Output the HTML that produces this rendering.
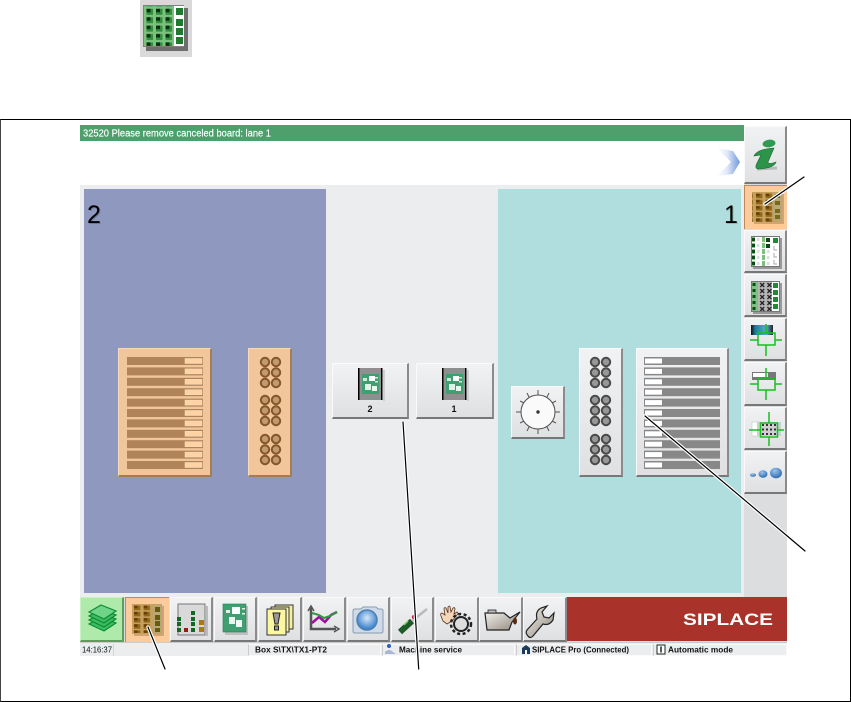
<!DOCTYPE html>
<html><head><meta charset="utf-8"><style>
html,body{margin:0;padding:0;background:#fff}
body{width:851px;height:702px;position:relative;overflow:hidden;font-family:"Liberation Sans",sans-serif}
.a{position:absolute;box-sizing:border-box}
.b{position:absolute;box-sizing:border-box;background:linear-gradient(#f1f2f4,#dfe0e2);border-top:1px solid #fafafa;border-left:1px solid #fafafa;border-right:2px solid #8b8b8b;border-bottom:2px solid #777}
.o{background:#fccb9b;border:0;border-left:1px solid #c08a58;border-top:1px solid #c08a58}
</style></head><body>
<div class="a" style="left:140px;top:0;width:52px;height:57px;background:#d9d9d9"></div>
<div class="a" style="left:0;top:119px;width:851px;height:583px;border:1px solid #000;border-left-color:#444"></div>
<div class="a" style="left:80px;top:125px;width:664px;height:16px;background:#4e9f6b"></div>
<div class="a" style="left:80px;top:185px;width:664px;height:412px;background:#ecedef"></div>
<div class="a" style="left:84px;top:189px;width:242px;height:404px;background:#8f99bf"></div>
<div class="a" style="left:498px;top:189px;width:243px;height:404px;background:#b0dddd"></div>
<div class="a" style="left:744px;top:126px;width:43px;height:471px;background:#dcdddf"></div>
<div class="b" style="left:744px;top:126px;width:43px;height:58px"></div>
<div class="b o" style="left:744px;top:185px;width:43px;height:44px"></div>
<div class="b" style="left:744px;top:230px;width:43px;height:43px"></div>
<div class="b" style="left:744px;top:274px;width:43px;height:43px"></div>
<div class="b" style="left:744px;top:318px;width:43px;height:43px"></div>
<div class="b" style="left:744px;top:362px;width:43px;height:44px"></div>
<div class="b" style="left:744px;top:407px;width:43px;height:43px"></div>
<div class="b" style="left:744px;top:451px;width:43px;height:43px"></div>
<div class="a" style="left:118px;top:348px;width:94px;height:129px;background:#f2c69b;border:1px solid #f7d9bc;border-right:2px solid #a67c52;border-bottom:2px solid #a67c52"></div>
<div class="a" style="left:248px;top:348px;width:44px;height:129px;background:#f2c69b;border:1px solid #f7d9bc;border-right:2px solid #a67c52;border-bottom:2px solid #a67c52"></div>
<div class="b" style="left:579px;top:348px;width:44px;height:129px"></div>
<div class="b" style="left:636px;top:348px;width:93px;height:129px"></div>
<div class="b" style="left:511px;top:386px;width:54px;height:53px"></div>
<div class="b" style="left:332px;top:363px;width:77px;height:56px"></div>
<div class="b" style="left:416px;top:363px;width:78px;height:56px"></div>
<div class="a" style="left:80px;top:597px;width:707px;height:45px;background:#dcdddf"></div>
<div class="b" style="left:80px;top:597px;width:44px;height:45px;background:#aeeaaa;border-color:#c8f2c4 #5f9c5f #5f9c5f #c8f2c4"></div>
<div class="b o" style="left:125px;top:597px;width:44px;height:45px"></div>
<div class="b" style="left:170px;top:597px;width:43px;height:45px"></div>
<div class="b" style="left:214px;top:597px;width:43px;height:45px"></div>
<div class="b" style="left:258px;top:597px;width:44px;height:45px"></div>
<div class="b" style="left:303px;top:597px;width:43px;height:45px"></div>
<div class="b" style="left:347px;top:597px;width:43px;height:45px"></div>
<div class="b" style="left:391px;top:597px;width:43px;height:45px"></div>
<div class="b" style="left:435px;top:597px;width:44px;height:45px"></div>
<div class="b" style="left:479px;top:597px;width:44px;height:45px"></div>
<div class="b" style="left:523px;top:597px;width:44px;height:45px"></div>
<div class="a" style="left:567px;top:597px;width:220px;height:44px;background:#a9322a"></div>
<div class="a" style="left:80px;top:642px;width:707px;height:14px;background:#ecedef;border-top:1px solid #ccc"></div>
<div class="a" style="left:113px;top:644px;width:1px;height:12px;background:#d5d5d5"></div>
<div class="a" style="left:248px;top:644px;width:133px;height:12px;border:1px solid #fafafa;border-left-color:#ccc"></div>
<div class="a" style="left:382px;top:644px;width:133px;height:12px;border:1px solid #fafafa;border-left-color:#ccc"></div>
<div class="a" style="left:516px;top:644px;width:136px;height:12px;border:1px solid #fafafa;border-left-color:#ccc"></div>
<div class="a" style="left:653px;top:644px;width:134px;height:12px;border:1px solid #fafafa;border-left-color:#ccc"></div>

<svg class="a" style="left:0;top:0" width="851" height="702" viewBox="0 0 851 702">
<defs>
<linearGradient id="chev" x1="0" x2="1" y1="0" y2="0"><stop offset="0" stop-color="#fff"/><stop offset=".45" stop-color="#dfe8f8"/><stop offset="1" stop-color="#6f97dc"/></linearGradient>
<linearGradient id="teal" x1="0" x2="1" y1="0" y2="0"><stop offset="0" stop-color="#111"/><stop offset=".2" stop-color="#1a7f9a"/><stop offset=".7" stop-color="#55b0c8"/><stop offset="1" stop-color="#222"/></linearGradient>
<radialGradient id="drop" cx=".4" cy=".3" r=".8"><stop offset="0" stop-color="#9cc4ee"/><stop offset="1" stop-color="#1f5fa8"/></radialGradient>
<radialGradient id="lens" cx=".5" cy=".4" r=".6"><stop offset="0" stop-color="#d6e8fa"/><stop offset="1" stop-color="#2f78c8"/></radialGradient>
<linearGradient id="can" x1="0" x2="1" y1="0" y2="1"><stop offset="0" stop-color="#f5f3ee"/><stop offset="1" stop-color="#8d857a"/></linearGradient>
<pattern id="pg" width="9.500" height="8.400" patternUnits="userSpaceOnUse" x="146" y="8"><rect width="9.500" height="8.400" fill="#7fc080"/><rect x=".5" y=".8" width="6.500" height="6" fill="#2f8f3c"/><rect x=".5" y=".8" width="4" height="3.500" fill="#07300e"/></pattern>
<pattern id="po" width="9.600" height="6.200" patternUnits="userSpaceOnUse" x="755" y="193"><rect width="9.600" height="6.200" fill="#c7a060"/><rect x="1" y=".6" width="6.400" height="4.600" fill="#8e6a16"/><rect x="1" y=".6" width="3.600" height="2.600" fill="#6a3d08"/></pattern>
<pattern id="po2" width="9.600" height="6.200" patternUnits="userSpaceOnUse" x="133" y="605"><rect width="9.600" height="6.200" fill="#c7a060"/><rect x="1" y=".6" width="6.400" height="4.600" fill="#8e6a16"/><rect x="1" y=".6" width="3.600" height="2.600" fill="#6a3d08"/></pattern>
<pattern id="pl" width="10" height="6" patternUnits="userSpaceOnUse" x="752" y="237"><rect width="10" height="6" fill="#fff"/><rect width="3" height="5" fill="#7fc080"/><path d="M5 1h2.500v3H5z" fill="#ddd"/></pattern>
<pattern id="px" width="7.200" height="6" patternUnits="userSpaceOnUse" x="752" y="282"><rect width="7.200" height="6" fill="#b5b5b5"/><path d="M1 1l4 4M5 1l-4 4" stroke="#222" stroke-width="1.300"/></pattern>
<g id="cc"><circle cx="0" cy="0" r="4.200"/><circle cx="11" cy="0" r="4.200"/><circle cx="0" cy="10.500" r="4.200"/><circle cx="11" cy="10.500" r="4.200"/><circle cx="0" cy="21" r="4.200"/><circle cx="11" cy="21" r="4.200"/><circle cx="0" cy="38" r="4.200"/><circle cx="11" cy="38" r="4.200"/><circle cx="0" cy="48.500" r="4.200"/><circle cx="11" cy="48.500" r="4.200"/><circle cx="0" cy="59" r="4.200"/><circle cx="11" cy="59" r="4.200"/><circle cx="0" cy="77" r="4.200"/><circle cx="11" cy="77" r="4.200"/><circle cx="0" cy="87.500" r="4.200"/><circle cx="11" cy="87.500" r="4.200"/><circle cx="0" cy="98" r="4.200"/><circle cx="11" cy="98" r="4.200"/></g>
<g id="ys"><rect x="0" y="0" width="76" height="8"/><rect x="0" y="10.400" width="76" height="8"/><rect x="0" y="20.800" width="76" height="8"/><rect x="0" y="31.200" width="76" height="8"/><rect x="0" y="41.600" width="76" height="8"/><rect x="0" y="52" width="76" height="8"/><rect x="0" y="62.400" width="76" height="8"/><rect x="0" y="72.800" width="76" height="8"/><rect x="0" y="83.200" width="76" height="8"/><rect x="0" y="93.600" width="76" height="8"/><rect x="0" y="104" width="76" height="8"/></g>
<g id="yss"><rect x="0" y="1.500" width="17" height="5"/><rect x="0" y="11.900" width="17" height="5"/><rect x="0" y="22.300" width="17" height="5"/><rect x="0" y="32.700" width="17" height="5"/><rect x="0" y="43.100" width="17" height="5"/><rect x="0" y="53.500" width="17" height="5"/><rect x="0" y="63.900" width="17" height="5"/><rect x="0" y="74.300" width="17" height="5"/><rect x="0" y="84.700" width="17" height="5"/><rect x="0" y="95.100" width="17" height="5"/><rect x="0" y="105.500" width="17" height="5"/></g>
<g id="pcb"><rect x="-11" y="0" width="23" height="32" fill="#8f8f8f"/><rect x="-12" y="0" width="1.500" height="32" fill="#000"/><rect x="11" y="0" width="1.500" height="32" fill="#000"/><rect x="13" y="2" width="2" height="31" fill="#cfcfcf"/><rect x="-8" y="6" width="17" height="20" fill="#3f9f70"/><rect x="-1" y="8" width="6" height="5" fill="#fff"/><rect x="-7" y="10" width="4" height="3" fill="#cfe9d8"/><rect x="-5" y="16" width="6" height="6" fill="#dff2e6"/><rect x="2" y="18" width="5" height="5" fill="#e8f6ee"/><rect x="5" y="9" width="3" height="1.500" fill="#cfe9d8"/><rect x="5" y="13" width="3" height="1.500" fill="#cfe9d8"/></g>
</defs>

<!-- top legend icon -->
<rect x="146" y="8" width="42" height="43" fill="#6e6e6e"/>
<rect x="143" y="5" width="41" height="42" fill="#808080"/>
<rect x="144" y="6" width="30" height="40" fill="url(#pg)"/>
<rect x="174" y="6" width="10" height="40" fill="#fff"/>
<rect x="176" y="8" width="7" height="7" fill="#1d7a2e"/><rect x="176" y="19" width="7" height="7" fill="#1d7a2e"/><rect x="176" y="28" width="7" height="7" fill="#1d7a2e"/><rect x="176" y="37" width="7" height="7" fill="#1d7a2e"/>

<text x="83" y="136.500" font-family="Liberation Sans,sans-serif" font-size="10" fill="#fff" stroke="#fff" stroke-width=".15" textLength="188" lengthAdjust="spacingAndGlyphs">32520 Please remove canceled board: lane 1</text>
<polygon points="717,148 733,151 740,162 733,174 717,176 731,162" fill="url(#chev)"/>

<!-- info i -->
<path d="M757 169 l20 -1" stroke="#b9b9b9" stroke-width="3"/>
<ellipse cx="769" cy="143.500" rx="6.500" ry="3.800" fill="#2f9a50" transform="rotate(-8 769 143.500)"/>
<path d="M754 156 Q757 149 774 148 L768 162 Q768 165 776 162 Q774 168 759 169 Q754 169 757 163 L761 155 Z" fill="#2b9448" stroke="#1a6a32" stroke-width=".6"/>

<!-- big numerals -->
<g font-family="Liberation Sans,sans-serif" font-size="25">
<text x="88" y="224" fill="#6f7898">2</text><text x="87" y="223" fill="#000">2</text>
<text x="725" y="224" fill="#8fb8b8">1</text><text x="724" y="223" fill="#000">1</text>
</g>

<!-- right side icons -->
<rect x="754" y="194" width="30" height="30" fill="#a87c50" opacity=".5"/>
<rect x="752" y="192" width="30" height="30" fill="#c7a060"/>
<rect x="752" y="192" width="21" height="30" fill="url(#po)"/>
<rect x="774" y="193" width="7" height="28" fill="#b7a878"/>
<rect x="775" y="201" width="5" height="4" fill="#7a6a14"/><rect x="775" y="209" width="5" height="4" fill="#7a6a14"/><rect x="775" y="215" width="5" height="4" fill="#7a6a14"/><rect x="775" y="194" width="5" height="4" fill="#7a6a14"/>

<rect x="753" y="238" width="29" height="31" fill="#999"/>
<rect x="751" y="236" width="29" height="31" fill="#777"/>
<rect x="752" y="237" width="20" height="29" fill="url(#pl)"/>
<rect x="752" y="238" width="3" height="3" fill="#0b4a18"/><rect x="752" y="244" width="3" height="3" fill="#0b4a18"/><rect x="752" y="250" width="3" height="3" fill="#0b4a18"/><rect x="752" y="256" width="3" height="3" fill="#0b4a18"/><rect x="752" y="262" width="3" height="3" fill="#0b4a18"/><rect x="766" y="238" width="4" height="4" fill="#0b4a18"/><rect x="766" y="244" width="4" height="4" fill="#0b4a18"/>
<rect x="772" y="237" width="7" height="29" fill="#fff"/><rect x="773" y="238" width="5" height="5" fill="#1e8a34"/><path d="M774 246v4h3M774 253v4h3M774 260v4h3" stroke="#aaa" fill="none"/>

<rect x="753" y="283" width="29" height="31" fill="#999"/>
<rect x="751" y="281" width="29" height="31" fill="#777"/>
<rect x="752" y="282" width="20" height="29" fill="url(#px)"/>
<rect x="752" y="282" width="6" height="29" fill="#7fc080"/>
<rect x="752.500" y="283" width="3" height="3" fill="#0b4a18"/><rect x="752.500" y="289" width="3" height="3" fill="#0b4a18"/><rect x="752.500" y="295" width="3" height="3" fill="#0b4a18"/><rect x="752.500" y="301" width="3" height="3" fill="#0b4a18"/><rect x="752.500" y="307" width="3" height="3" fill="#0b4a18"/>
<rect x="772" y="282" width="7" height="29" fill="#fff"/>
<rect x="773" y="283" width="5" height="5" fill="#1e8a34"/><rect x="773" y="290" width="5" height="5" fill="#1e8a34"/><rect x="773" y="297" width="5" height="5" fill="#1e8a34"/><rect x="773" y="304" width="5" height="5" fill="#1e8a34"/>

<rect x="751" y="325" width="22" height="10" fill="url(#teal)"/>
<g fill="none" stroke="#16c020" stroke-width="1.500"><rect x="758" y="333" width="17" height="12"/><path d="M750 340h8M775 340h7M766 324v9M766 345v11"/></g>

<rect x="752" y="372" width="24" height="8" fill="#777"/><rect x="753" y="373" width="15" height="4" fill="#fff"/>
<g fill="none" stroke="#16c020" stroke-width="1.500"><rect x="758" y="378" width="17" height="12"/><path d="M750 384h8M775 384h7M766 368v10M766 390v10"/></g>

<rect x="752" y="422" width="8" height="14" fill="#fff" stroke="#bbb" stroke-width=".5"/>
<rect x="757" y="422" width="24" height="14" fill="#cfcfcf"/>
<path d="M762 425h16M762 429.500h16M762 434h16" stroke="#333" stroke-width="2" stroke-dasharray="2 2"/>
<g fill="none" stroke="#16c020" stroke-width="1.500"><rect x="760.500" y="423" width="17" height="14"/><path d="M749 430h11M778 430h6M769 412v11M769 437v9"/></g>

<ellipse cx="753" cy="475" rx="3" ry="1.800" fill="url(#drop)"/><ellipse cx="763" cy="474" rx="4.500" ry="3.700" fill="url(#drop)"/><ellipse cx="776" cy="473" rx="6" ry="5.300" fill="url(#drop)"/>

<!-- left feeders -->
<use href="#ys" x="127" y="357" fill="#b08458"/>
<use href="#yss" x="185" y="357" fill="#ffd2a4" stroke="#f5e3cc" stroke-width=".5"/>
<use href="#cc" x="265" y="362" stroke="#855628" stroke-width="2" fill="#c09a70"/>

<!-- right feeders -->
<use href="#ys" x="644" y="357" fill="#888"/>
<use href="#yss" x="645" y="357" fill="#fff"/>
<use href="#cc" x="595" y="362" stroke="#4a4a4a" stroke-width="2" fill="#979797"/>
<circle cx="538" cy="412" r="17" fill="#fafafa" stroke="#4c4c4c" stroke-width="1"/>
<g stroke="#555" stroke-width="1"><path d="M538 390v5M538 429v5M516 412h5M555 412h5M520 401l4 2M552 421l4 2M556 401l-4 2M524 421l-4 2M527 393l2 4M547 427l2 4M549 393l-2 4M529 427l-2 4"/></g>
<circle cx="538" cy="412" r="1.700" fill="#333"/>

<!-- middle buttons -->
<use href="#pcb" x="370" y="368"/>
<use href="#pcb" x="454" y="368"/>
<text x="370" y="412" text-anchor="middle" font-family="Liberation Sans,sans-serif" font-size="9" font-weight="700" fill="#111">2</text>
<text x="454" y="412" text-anchor="middle" font-family="Liberation Sans,sans-serif" font-size="9" font-weight="700" fill="#111">1</text>

<!-- bottom: stacked boards -->
<g stroke="#0b8a34" stroke-width="1.200" fill="#3dbb60">
<path d="M89 624l12-7 15 6-12 8z"/><path d="M89 620l12-7 15 6-12 8z"/><path d="M89 616l12-7 15 6-12 8z"/><path d="M89 612l12-7 15 6-12 8z" fill="#6fd488"/>
</g>
<!-- bottom: orange grid -->
<rect x="134" y="606" width="30" height="30" fill="#a87c50" opacity=".5"/>
<rect x="132" y="604" width="30" height="30" fill="#c7a060"/>
<rect x="133" y="605" width="20" height="28" fill="url(#po2)"/>
<rect x="154" y="605" width="7" height="28" fill="#b7a878"/>
<rect x="155" y="607" width="5" height="5" fill="#6a5a10"/><rect x="155" y="615" width="5" height="5" fill="#6a5a10"/><rect x="155" y="621" width="5" height="5" fill="#6a5a10"/><rect x="155" y="628" width="5" height="4" fill="#6a5a10"/>
<!-- bars -->
<rect x="178" y="604" width="27" height="31" fill="#d9d9d9" stroke="#777"/>
<rect x="206" y="606" width="2" height="30" fill="#bbb"/>
<g fill="#0f6a22"><rect x="177" y="617" width="4" height="4"/><rect x="177" y="622" width="4" height="4"/><rect x="177" y="628" width="4" height="4"/><rect x="191" y="611" width="4" height="4"/><rect x="191" y="617" width="4" height="4"/><rect x="191" y="622" width="4" height="4"/><rect x="191" y="628" width="4" height="4"/></g>
<rect x="184" y="628" width="4" height="4" fill="#a01818"/>
<rect x="199" y="620" width="5" height="5" fill="#a87a10"/><rect x="199" y="627" width="5" height="5" fill="#a87a10"/>
<!-- pcb -->
<rect x="225" y="606" width="23" height="29" fill="#c0c0c0"/>
<rect x="223" y="604" width="23" height="28" fill="#3f9f70" stroke="#2c7a54" stroke-width=".6"/>
<rect x="232" y="607" width="8" height="7" fill="#fff"/><rect x="226" y="610" width="4" height="3" fill="#dff2e6"/><rect x="229" y="617" width="6" height="7" fill="#e8f6ee"/><rect x="236" y="620" width="6" height="7" fill="#f2faf5"/><rect x="242" y="608" width="3" height="1.500" fill="#dff2e6"/><rect x="242" y="613" width="3" height="1.500" fill="#dff2e6"/>
<!-- exclamation docs -->
<rect x="275" y="605" width="18" height="24" fill="#f4f0a0" stroke="#333"/>
<rect x="271" y="607" width="18" height="25" fill="#f8f4a8" stroke="#333"/>
<rect x="267" y="609" width="19" height="26" fill="#fbf7a0" stroke="#333"/>
<path d="M273 613h7l-2 11h-3z" fill="#999" stroke="#222"/><rect x="274.500" y="626" width="4" height="4" fill="#999" stroke="#222"/>
<!-- chart -->
<path d="M311 607v22h25" fill="none" stroke="#555" stroke-width="2.500"/><path d="M308 611l3-5 3 5M334 626l5 3-5 3" fill="none" stroke="#555" stroke-width="1.500"/>
<path d="M312 623l7-6 6 5 6-7 6-3" fill="none" stroke="#a010a0" stroke-width="2.500"/>
<path d="M312 613l7 2 5 3 6-2 7-4" fill="none" stroke="#2a9a3a" stroke-width="2"/>
<!-- camera -->
<path d="M355 609h6l2-2h13l2 2h3q2 0 2 2v20q0 2-2 2h-26q-2 0-2-2v-20q0-2 2-2z" fill="#cfdbe8" stroke="#8a9cb0"/>
<circle cx="367" cy="620" r="10" fill="url(#lens)" stroke="#4f7fb0" stroke-width="1.500"/>
<!-- tool -->
<path d="M400 632l12-11" stroke="#1c5a28" stroke-width="6"/><path d="M412 621l15-12" stroke="#bbb" stroke-width="2.500"/><circle cx="414" cy="617" r="2.200" fill="#c02040"/><path d="M404 625l4-4" stroke="#7bd06a" stroke-width="1.500"/>
<!-- hand gear -->
<path d="M441 616q-1-3 1-3l3 2-1-6q0-2 2-1l2 5 0-6q2-2 2 0l1 5 2-4q2-1 2 1l-1 5 3-2q2 1 0 3l-5 6-5 3-4-3z" fill="#f4d6b8" stroke="#553322" stroke-width=".8"/>
<circle cx="461" cy="624" r="7" fill="#ddd" stroke="#222" stroke-width="2"/><circle cx="461" cy="624" r="10" fill="none" stroke="#222" stroke-width="2.500" stroke-dasharray="3 2.500"/>
<!-- oil can -->
<path d="M485 613h19l6 5 10-6-8 10-3 8h-22z" fill="url(#can)" stroke="#222" stroke-width="1.200"/>
<rect x="488" y="610" width="8" height="3" fill="#bbb" stroke="#222" stroke-width=".8"/>
<ellipse cx="515" cy="621" rx="2" ry="3.500" fill="#5a2a10"/>
<!-- wrench -->
<path d="M528 636q-3-3-1-6l10-11q-2-8 4-11l6-2-5 6 2 5 5 1 5-5-1 7q-4 6-10 4l-10 12q-3 3-5 0z" fill="url(#can)" stroke="#222" stroke-width="1.200"/>

<text x="683" y="625" font-family="Liberation Sans,sans-serif" font-size="17" font-weight="700" fill="#fff" textLength="90" lengthAdjust="spacingAndGlyphs">SIPLACE</text>

<!-- status -->
<g font-family="Liberation Sans,sans-serif" font-size="8.500" fill="#111">
<text x="82" y="652.500" textLength="30" lengthAdjust="spacingAndGlyphs">14:16:37</text>
<g font-weight="700">
<text x="255" y="652.500" textLength="72" lengthAdjust="spacingAndGlyphs">Box S\TX\TX1-PT2</text>
<text x="399" y="652.500" textLength="63" lengthAdjust="spacingAndGlyphs">Machine service</text>
<text x="532" y="652.500" textLength="97" lengthAdjust="spacingAndGlyphs">SIPLACE Pro (Connected)</text>
<text x="668" y="652.500" textLength="65" lengthAdjust="spacingAndGlyphs">Automatic mode</text>
</g></g>
<circle cx="389" cy="646" r="2" fill="#2a5fc0"/><path d="M385 652q4-4 8 0l3 2h-11z" fill="#a8b8d0"/>
<path d="M522 648l4-3 4 3v6h-8z" fill="#1c3a5a"/><rect x="525" y="650" width="2" height="4" fill="#fff"/>
<rect x="657" y="645" width="8" height="9" fill="#fff" stroke="#222"/><path d="M661 646.500v6" stroke="#222" stroke-width="1.500"/>

<!-- callout lines -->
<g fill="none" stroke-linecap="round">
<g stroke="#fff" stroke-width="3.500"><path d="M765 204L804 177"/><path d="M645 416L805 551"/><path d="M403 422L418.700 669"/><path d="M148 627L165 669"/></g>
<g stroke="#000" stroke-width="1.200"><path d="M765 204L804 177"/><path d="M645 416L805 551"/><path d="M403 422L418.700 669"/><path d="M148 627L165 669"/></g>
</g>
</svg>
</body></html>
